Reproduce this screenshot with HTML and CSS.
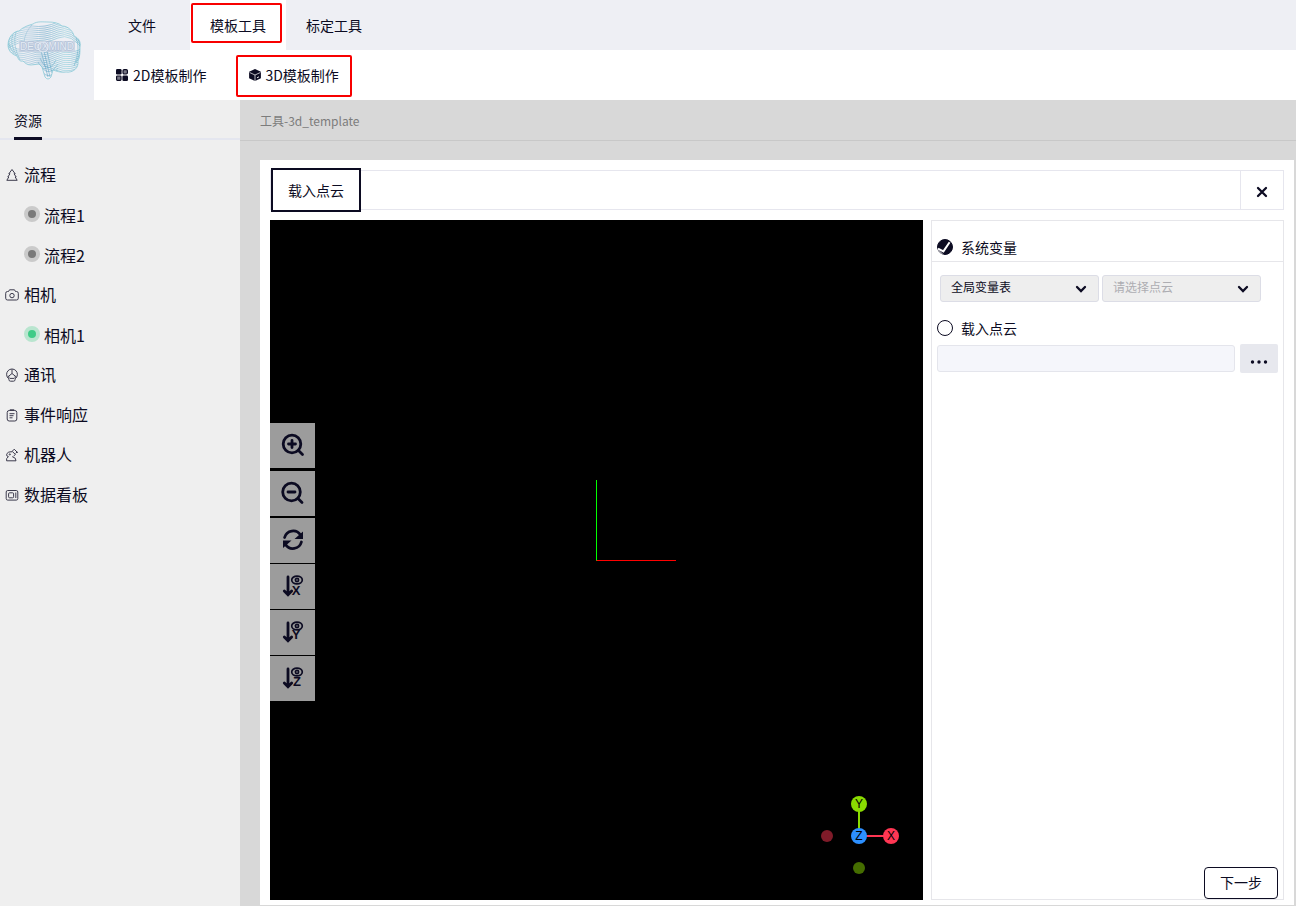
FILE: index.html
```html
<!DOCTYPE html>
<html lang="zh-CN">
<head>
<meta charset="utf-8">
<title>3D模板制作</title>
<link rel="stylesheet" href="styles.css">
</head>
<body>
<div class="app">
  <header class="header">
    <div class="logo">
      <svg width="94" height="100" viewBox="0 0 94 100" role="img" aria-label="logo">
        <defs>
          <linearGradient id="ink" x1="0" y1="0" x2="94" y2="0" gradientUnits="userSpaceOnUse">
            <stop offset=".08" stop-color="#7cc0d2"/><stop offset=".3" stop-color="#9cc3da"/><stop offset=".48" stop-color="#5fa3c4"/><stop offset=".7" stop-color="#8fd0dc"/><stop offset=".87" stop-color="#5fa9c4"/>
          </linearGradient>
          <clipPath id="brain"><path d="M8 45C8 37 14 31 19 31C23 27 29 25 33 24C37 21 43 22 48 22C54 22 59 23 62 26C68 26 73 31 74 36C79 38 81 42 80 47C80 52 80 57 78 61C79 68 73 73 66 72C61 73 56 71 53 70L51 77Q48 81 45 77L42 67L39 64L31 65C27 65 25 63 23 61C19 62 18 58 17 56C11 54 8 50 8 45Z"/></clipPath>
        </defs>
        <g clip-path="url(#brain)" fill="none" stroke="url(#ink)" stroke-width=".6">
          <path d="M5 34Q19 24 32 26T58 22T85 36M5 36Q19 26 32 28T58 24T85 38M5 38Q19 28 32 30T58 26T85 40M5 40Q19 30 32 32T58 28T85 42M5 42Q19 32 32 34T58 30T85 44M5 44Q19 34 32 36T58 32T85 46M5 46Q19 36 32 38T58 34T85 48M5 48Q19 38 32 40T58 36T85 50M5 50Q19 40 32 42T58 38T85 52"/>
          <path d="M5 42Q18 53 30 48T56 50T86 46M5 44Q18 55 30 50T56 52T86 48M5 46Q18 57 30 52T56 54T86 50M5 48Q18 59 30 54T56 56T86 52M5 50Q18 61 30 56T56 58T86 54M5 52Q18 63 30 58T56 60T86 56M5 54Q18 65 30 60T56 62T86 58M5 56Q18 67 30 62T56 64T86 60M5 58Q18 69 30 64T56 66T86 62M5 60Q18 71 30 66T56 68T86 64M5 62Q18 73 30 68T56 70T86 66M5 64Q18 75 30 70T56 72T86 68M38 66Q48 84 58 68M38 62Q48 80 58 64M40 58Q48 76 56 60"/>
          <path d="M10 36Q6 44 14 53M13 34Q9 44 17 56M16 32Q12 44 20 60M78 39Q83 48 76 63M76 38Q81 48 74 66M32 25Q25 32 24 42M41 51L48 77M44 51L50 77M47 51L52 73"/>
        </g>
        <path d="M8 45C8 37 14 31 19 31C23 27 29 25 33 24C37 21 43 22 48 22C54 22 59 23 62 26C68 26 73 31 74 36C79 38 81 42 80 47C80 52 80 57 78 61C79 68 73 73 66 72C61 73 56 71 53 70L51 77Q48 81 45 77L42 67L39 64L31 65C27 65 25 63 23 61C19 62 18 58 17 56C11 54 8 50 8 45Z" fill="none" stroke="#80c5d4" stroke-width=".7"/>
        <rect x="19" y="41" width="56" height="11" fill="#c3cfe0" opacity=".75"/>
        <text class="logo-text" x="47" y="50" text-anchor="middle">DEOXMIND</text>
        <circle cx="43" cy="47" r="5" fill="none" stroke="#edf1f7" stroke-width=".8"/>
      </svg>
    </div>
    <div class="bars">
      <nav class="menu">
        <button class="menu-item">文件</button>
        <button class="menu-item active">模板工具</button>
        <button class="menu-item">标定工具</button>
        <span class="marker marker-menu"></span>
      </nav>
      <nav class="submenu">
        <button class="sub-item">
          <svg width="12" height="12" viewBox="0 0 12 12" fill="#0c0b22"><rect width="5.6" height="5.6" rx="1.3"/><rect x=".6" y="7" width="4.4" height="4.4" rx=".8" fill="#777684" stroke="#0c0b22" stroke-width="1.2"/><rect x="6.4" y="6.4" width="5.6" height="5.6" rx="1.3"/><rect x="7" y=".6" width="4.4" height="4.4" rx="1.2" fill="#777684" stroke="#0c0b22" stroke-width="1.2"/></svg>
          2D模板制作
        </button>
        <button class="sub-item">
          <svg width="12" height="12" viewBox="0 0 12 12"><path d="M6 0L11.9 2.8V9.2L6 12L.1 9.2V2.8Z" fill="#0c0b22"/><path d="M.6 3.5L6 6L11.4 3.5M6 6V12" fill="none" stroke="#fff" stroke-width=".7"/><path d="M8 8.8L10 7.8" stroke="#fff" stroke-width=".9"/></svg>
          3D模板制作
        </button>
        <span class="marker marker-sub"></span>
      </nav>
    </div>
  </header>

  <div class="body">
    <aside class="sidebar">
      <div class="side-head"><span class="side-tab">资源</span></div>
      <ul class="tree">
        <li class="node"><svg class="ico" viewBox="0 0 14 14"><path d="M7 1.5L3.8 5.8H5L2.8 9H3.8L1.8 12.3H12.2L10.2 9H11.2L9 5.8H10.2Z"/></svg>流程</li>
        <li class="node child"><span class="dot"></span>流程1</li>
        <li class="node child"><span class="dot"></span>流程2</li>
        <li class="node"><svg class="ico" viewBox="0 0 14 14"><path d="M2.5 3.5H3.5L4.5 1.8H9.5L10.5 3.5H11.5Q13.3 3.5 13.3 5.3V10.2Q13.3 12 11.5 12H2.5Q.7 12 .7 10.2V5.3Q.7 3.5 2.5 3.5Z"/><circle cx="7" cy="7.6" r="2.2"/></svg>相机</li>
        <li class="node child"><span class="dot on"></span>相机1</li>
        <li class="node"><svg class="ico" viewBox="0 0 14 14"><path d="M3.6 10.6A5.4 5.4 0 1 1 10.4 10.6M7 1.4V5.5M7 5.5L2.6 9M7 5.5L11.4 9M3.9 8.4V11.5Q3.9 13.2 5.5 13.2H8.5Q10.1 13.2 10.1 11.5V8.4M5 10.4H9"/></svg>通讯</li>
        <li class="node"><svg class="ico" viewBox="0 0 14 14"><rect x="2.2" y="2.5" width="9.6" height="10.5" rx="2"/><path d="M4.8 1.8H9.2M4.5 5.7H9.5M4.5 7.7H8.5M4.5 9.8H7.5"/></svg>事件响应</li>
        <li class="node"><svg class="ico" viewBox="0 0 14 14"><path d="M7.2 3.3L9.2 1.2L12.8 4.8M10.6 5.4L12.2 3.8M7.2 3.3L10.4 6.5L8.6 8M7.2 3.8Q2.2 3.4 1.6 6.8Q1.6 8.4 3.4 8.6Q.9 10.4 1.6 12.8H11Q11.4 9.8 7.2 8.6"/><circle cx="4.8" cy="6.4" r=".6"/></svg>机器人</li>
        <li class="node"><svg class="ico" viewBox="0 0 14 14"><rect x="1.2" y="2.5" width="11.6" height="9.6" rx="1.5"/><rect x="3.6" y="4.8" width="5" height="5" rx="1"/><path d="M10.8 4.5V10"/></svg>数据看板</li>
      </ul>
    </aside>

    <main class="main">
      <div class="crumb">工具-3d_template</div>
      <section class="panel">
        <div class="toolbar">
          <button class="step">载入点云</button>
          <button class="close" aria-label="关闭"><svg width="12" height="12" viewBox="0 0 12 12"><path d="M2 2L10 10M10 2L2 10" stroke="#0c0b22" stroke-width="2.3" stroke-linecap="round"/></svg></button>
        </div>
        <div class="work">
          <div class="viewport">
            <div class="axes"></div>
            <div class="tools">
              <button class="tool gap-l" aria-label="放大"><svg viewBox="0 0 24 24"><circle cx="11" cy="11" r="8.8"/><path d="M17.5 17.5L21.5 21.5M7.5 11H14.5M11 7.5V14.5"/></svg></button>
              <button class="tool gap-m" aria-label="缩小"><svg viewBox="0 0 24 24"><circle cx="10.5" cy="11" r="8.8"/><path d="M17 17.5L21 21.5M7 11H14"/></svg></button>
              <button class="tool" aria-label="重置"><svg viewBox="0 0 24 24"><path d="M3.6 9.5A8.8 8.8 0 0 1 19.5 7M20.4 14A8.8 8.8 0 0 1 4.5 16.5"/><path class="solid" d="M22 3.5V11H13.5ZM2 20V12.5H10.5Z"/></svg></button>
              <button class="tool" aria-label="X视图"><svg viewBox="0 0 24 24"><path d="M7 3V20.5M3.3 17L7 20.8L10.7 17"/><ellipse class="thin" cx="16" cy="6" rx="5.3" ry="3.8"/><circle class="thin" cx="16" cy="6" r="1.6"/><text x="15" y="21">X</text></svg></button>
              <button class="tool" aria-label="Y视图"><svg viewBox="0 0 24 24"><path d="M7 3V20.5M3.3 17L7 20.8L10.7 17"/><ellipse class="thin" cx="16" cy="6" rx="5.3" ry="3.8"/><circle class="thin" cx="16" cy="6" r="1.6"/><text x="15" y="19">Y</text></svg></button>
              <button class="tool" aria-label="Z视图"><svg viewBox="0 0 24 24"><path d="M7 3V20.5M3.3 17L7 20.8L10.7 17"/><ellipse class="thin" cx="16" cy="6" rx="5.3" ry="3.8"/><circle class="thin" cx="16" cy="6" r="1.6"/><text x="16" y="20">Z</text></svg></button>
            </div>
            <svg class="gizmo" width="80" height="80" viewBox="0 0 80 80">
              <path d="M40 40V8" stroke="#8adb00" stroke-width="2"/><path d="M40 40H72" stroke="#ff3653" stroke-width="2"/>
              <circle cx="8" cy="40" r="6" fill="#7f1b29"/><circle cx="40" cy="72" r="6" fill="#456d00"/>
              <circle cx="40" cy="8" r="8" fill="#8adb00"/><circle cx="72" cy="40" r="8" fill="#ff3653"/><circle cx="40" cy="40" r="8" fill="#2c8fff"/>
              <text x="40" y="12">Y</text><text x="72" y="44">X</text><text x="40" y="44">Z</text>
            </svg>
          </div>

          <form class="props">
            <label class="choice first"><span class="radio"><input type="radio" name="source" checked><svg viewBox="0 0 16 16"><path d="M1 9.6L6.4 12.4L12.6 3.3" fill="none" stroke="#fff" stroke-width="2"/><path d="M0 9.2L4.8 13.4L7 16H0Z" fill="#fff" opacity=".55"/></svg></span>系统变量</label>
            <div class="selects">
              <span class="select"><select aria-label="变量表"><option>全局变量表</option></select><svg viewBox="0 0 12 12"><path d="M2 4L6 8L10 4"/></svg></span>
              <span class="select empty"><select aria-label="点云"><option>请选择点云</option></select><svg viewBox="0 0 12 12"><path d="M2 4L6 8L10 4"/></svg></span>
            </div>
            <label class="choice"><span class="radio"><input type="radio" name="source"></span>载入点云</label>
            <div class="file">
              <input class="path" type="text" aria-label="点云文件">
              <button class="browse" type="button" aria-label="浏览"><svg width="18" height="4" viewBox="0 0 18 4" fill="#0c0b22"><circle cx="2.5" cy="2" r="1.7"/><circle cx="9" cy="2" r="1.7"/><circle cx="15.5" cy="2" r="1.7"/></svg></button>
            </div>
            <button class="next" type="button">下一步</button>
          </form>
        </div>
      </section>
    </main>
  </div>
</div>
</body>
</html>
```
FILE: styles.css
```css
* { box-sizing: border-box; }
body {
  margin: 0;
  color: #0c0b22;
  font: 14px/20px "Noto Sans CJK SC", sans-serif;
}
button, input, select { font: inherit; color: inherit; margin: 0; }
button { border: 0; background: none; padding: 0; cursor: pointer; }
svg { display: block; flex: none; }

.app { display: flex; flex-direction: column; min-height: 100vh; }

.header { display: flex; background: #eeeff4; }
.logo { width: 94px; flex: none; }
.logo-text { font: 10px "Liberation Sans", sans-serif; fill: #e6ecf4; stroke: #a9bad4; stroke-width: 1px; paint-order: stroke; }
.bars { flex: 1; }
.menu, .submenu { position: relative; display: flex; height: 50px; }
.menu-item { min-width: 96px; padding: 0 20px; }
.menu-item.active, .submenu { background: #fff; }
.submenu { padding-left: 22px; gap: 43px; }
.sub-item { display: flex; align-items: center; gap: 5px; }
.sub-item + .sub-item { gap: 4px; }
.marker { position: absolute; border: 2px solid #f80000; border-radius: 2px; pointer-events: none; }
.marker-menu { left: 97px; top: 3px; width: 91px; height: 40px; }
.marker-sub { left: 142px; top: 5px; width: 116px; height: 42px; }

.body { flex: 1; display: flex; }
.sidebar { width: 240px; flex: none; background: #efefef; }
.side-head { height: 40px; padding-left: 14px; box-shadow: inset 0 -2px #e4e6ef; }
.side-tab { display: inline-block; height: 40px; line-height: 40px; border-bottom: 3px solid #0c0b22; }
.tree { list-style: none; margin: 15px 0 0; padding: 0 0 0 5px; font-size: 16px; }
.node { display: flex; align-items: center; gap: 5px; height: 40px; padding-bottom: 2px; }
.ico { width: 14px; height: 14px; margin-top: 2px; fill: none; stroke: #3c3b4d; stroke-width: 1; }
.child { padding: 0 0 0 19px; gap: 4px; }
.dot { width: 16px; height: 16px; margin-bottom: 2px; border: 4px solid #cacaca; border-radius: 50%; background: #797979; }
.dot.on { border-color: #b9e5cf; background: #3fcb87; }

.main { flex: 1; display: flex; flex-direction: column; min-width: 0; background: #d8d8d8; padding-bottom: 1px; }
.crumb { height: 41px; padding-left: 20px; border-bottom: 1px solid #c8c8c8; color: #7c7c7c; font-size: 12px; line-height: 42px; }
.panel { flex: 1; display: flex; flex-direction: column; gap: 10px; margin: 19px 2px 0 20px; padding: 10px 10px 5px; background: #fff; }
.toolbar { display: flex; align-items: center; justify-content: space-between; height: 40px; border: 1px solid #e6e6ee; }
.step { width: 90px; height: 44px; flex: none; border: 2px solid #0c0b22; background: #fff; }
.close { width: 43px; height: 38px; display: grid; place-items: center; padding-top: 4px; border-left: 1px solid #e6e6ee; }

.work { flex: 1; display: flex; gap: 8px; }
.viewport { position: relative; flex: 1; min-height: 560px; background: #000; }
.axes { position: absolute; left: calc(50% - 1px); bottom: calc(50% - 1px); width: 80px; height: 81px; border-left: 1px solid #0f0; border-bottom: 1px solid #f00; }
.tools { position: absolute; left: 0; top: 203px; display: flex; flex-direction: column; gap: 1px; }
.tool { width: 45px; height: 45px; display: grid; place-items: center; padding-bottom: 1px; background: #9c9c9c; }
.gap-l { margin-bottom: 2px; }
.gap-m { margin-bottom: 1px; }
.tool svg { width: 24px; height: 24px; fill: none; stroke: #0c0b22; stroke-width: 2.8; stroke-linecap: round; }
.tool .thin { stroke-width: 1.7; }
.tool .solid, .tool text { fill: #0c0b22; stroke: none; }
.tool text { font: bold 13px "Liberation Sans", sans-serif; text-anchor: middle; }
.gizmo { position: absolute; right: 24px; bottom: 24px; }
.gizmo text { font: 12px "Liberation Sans", sans-serif; text-anchor: middle; }

.props { width: 353px; flex: none; display: flex; flex-direction: column; border: 1px solid #e6e6ea; }
.choice { display: flex; align-items: center; gap: 8px; padding-left: 5px; }
.first { height: 41px; padding-top: 12px; border-bottom: 1px solid #e6e6ea; }
.radio { position: relative; width: 16px; height: 16px; margin-bottom: 1px; }
.radio input { appearance: none; display: block; width: 16px; height: 16px; border: 1px solid #0c0b22; border-radius: 50%; background: #fff; }
.radio input:checked { background: #0c0b22; }
.radio svg { position: absolute; inset: 0; border-radius: 50%; pointer-events: none; }
.selects { display: flex; gap: 3px; margin: 13px 0 16px; padding-left: 8px; }
.select { position: relative; width: 159px; }
.select select { appearance: none; display: block; width: 100%; height: 27px; padding: 0 10px 3px; border: 1px solid #dcdde6; border-radius: 3px; background: #eee; font-size: 12px; }
.select svg { position: absolute; right: 12px; top: 8px; width: 12px; height: 12px; fill: none; stroke: #0c0b22; stroke-width: 2.3; stroke-linecap: round; pointer-events: none; }
.empty select { color: #adadb2; }
.file { display: flex; align-items: center; gap: 5px; margin-top: 6px; padding: 0 5px; }
.path { flex: 1; min-width: 0; height: 27px; padding: 0 8px; border: 1px solid #e4e5ec; border-radius: 3px; background: #f5f6fb; }
.browse { width: 38px; height: 29px; display: grid; place-items: center; padding-top: 7px; border-radius: 2px; background: #e7e8ee; }
.next { width: 74px; height: 32px; margin: auto 5px 0 auto; padding-bottom: 2px; border: 1px solid #0c0b22; border-radius: 4px; background: #fff; }
```
